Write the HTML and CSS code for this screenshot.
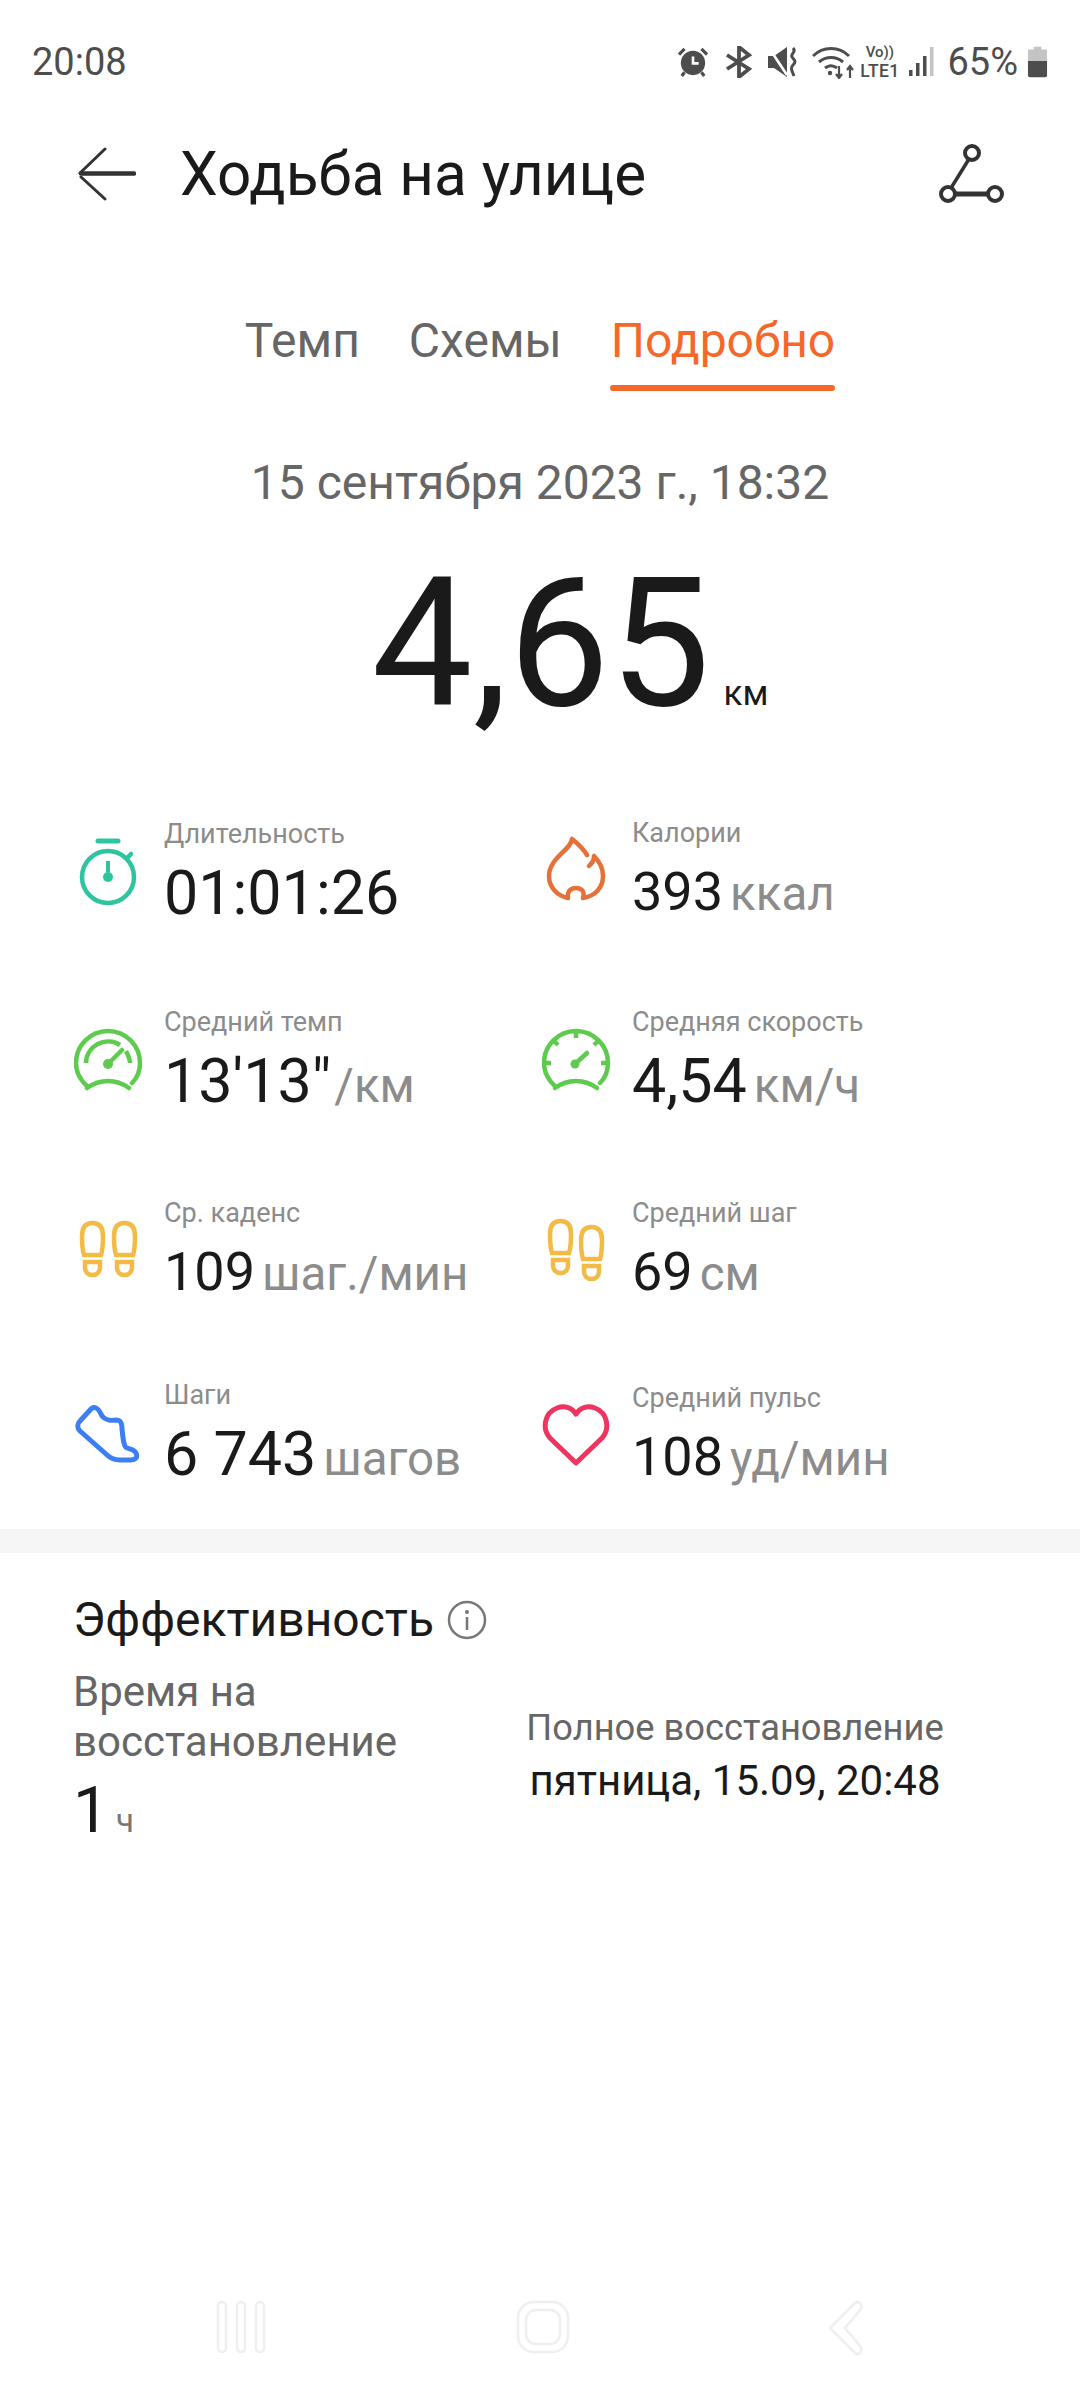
FILE: index.html
```html
<!DOCTYPE html>
<html lang="ru">
<head>
<meta charset="utf-8">
<title>Ходьба на улице</title>
<link rel="stylesheet" href="styles.css">
</head>
<body>
<div class="screen">
  <header class="status">
    <span class="clock">20:08</span>
    <div class="status-right">
      <svg class="si s-alarm" width="30" height="30" viewBox="0 0 32 32"><circle cx="16" cy="17" r="13" fill="#4d4d4d"/><path d="M16 10v7.500h6" stroke="#fff" stroke-width="2.800" fill="none"/><path d="M1 8l6-6M31 8l-6-6M7 27l-3 4M25 27l3 4" stroke="#4d4d4d" stroke-width="3.400" fill="none"/></svg>
      <svg class="si s-bt" width="28" height="32" viewBox="0 0 28 32"><path d="M2 9l22 14-10 8V1l10 8L2 23" stroke="#4d4d4d" stroke-width="3.800" fill="none"/></svg>
      <svg class="si s-mute" width="30" height="30" viewBox="0 0 30 30"><path d="M0 9h6l13-9v30L6 21H0z" fill="#4d4d4d"/><path d="M1 1l18 27" stroke="#fff" stroke-width="2.600"/><path d="M25 1c4 4-3 6-1 9s5 4 1 8c-3 3-1 6 1 11" stroke="#4d4d4d" stroke-width="3" fill="none"/></svg>
      <svg class="si s-wifi" width="42" height="33" viewBox="0 0 42 33"><path d="M1 10c10-10 26-10 36 0M7 16c7-6 17-6 24 0M13 22c4-3 8-3 12 0" stroke="#4d4d4d" stroke-width="3" fill="none"/><circle cx="18" cy="27" r="2.200" fill="#4d4d4d"/><path d="M27 20v12M24 28l3 4 3-4M38 32V20M35 24l3-4 3 4" stroke="#4d4d4d" stroke-width="2.200" fill="none"/></svg>
      <span class="volte"><span class="vo">Vo))</span><span class="lte">LTE1</span></span>
      <svg class="si s-sig" width="26" height="30" viewBox="0 0 26 30"><rect x="1" y="23" width="3.500" height="6" fill="#4d4d4d"/><rect x="8" y="16" width="3.500" height="13" fill="#4d4d4d"/><rect x="15" y="9" width="3.500" height="20" fill="#4d4d4d"/><rect x="22" y="0" width="3.500" height="29" fill="#c4c4c4"/></svg>
      <span class="pct">65%</span>
      <svg class="si s-bat" width="21" height="32" viewBox="0 0 22 32"><path d="M7 0h8v4H7z" fill="#c4c4c4"/><path d="M2 3h18a1 1 0 0 1 1 1v11H1V4a1 1 0 0 1 1-1z" fill="#c4c4c4"/><path d="M1 15h20v15a2 2 0 0 1-2 2H3a2 2 0 0 1-2-2z" fill="#4d4d4d"/></svg>
    </div>
  </header>

  <nav class="appbar">
    <svg class="back" width="58" height="54" viewBox="0 0 58 54"><path d="M27 2L2 26M3 30L27 52" stroke="#333" stroke-width="3" stroke-linecap="round" fill="none"/><path d="M3 26.500h53" stroke="#333" stroke-width="4.500" stroke-linecap="round" fill="none"/></svg>
    <h1 class="title">Ходьба на улице</h1>
    <svg class="share" width="68" height="60" viewBox="0 0 68 60"><circle cx="34" cy="9" r="7" fill="none" stroke="#333" stroke-width="4"/><circle cx="10" cy="50" r="7" fill="none" stroke="#333" stroke-width="4"/><circle cx="57" cy="50" r="7" fill="none" stroke="#333" stroke-width="4"/><path d="M31 15L13 44" stroke="#333" stroke-width="3.500" fill="none"/><path d="M17 50h33" stroke="#333" stroke-width="5" fill="none"/></svg>
  </nav>

  <div class="tabs">
    <span class="tab">Темп</span>
    <span class="tab">Схемы</span>
    <span class="tab active">Подробно</span>
  </div>

  <p class="date">15 сентября 2023 г., 18:32</p>
  <div class="distance"><span class="dist-val">4,65</span><span class="dist-unit">км</span></div>

  <section class="stats">
    <div class="stat">
      <svg class="ic" width="72" height="72" viewBox="0 0 72 72"><path d="M24 5h20" stroke="#2ec4a0" stroke-width="5" stroke-linecap="round"/><circle cx="34" cy="41" r="26" fill="none" stroke="#2ec4a0" stroke-width="4.500"/><path d="M34 25v11" stroke="#2ec4a0" stroke-width="4"/><circle cx="34" cy="41" r="5" fill="#2ec4a0"/><path d="M53 22l4-4" stroke="#2ec4a0" stroke-width="4.500" stroke-linecap="round"/></svg>
      <div class="txt"><div class="lbl">Длительность</div><div class="val"><b>01:01:26</b></div></div>
    </div>
    <div class="stat">
      <svg class="ic" width="72" height="72" viewBox="0 0 72 72"><path d="M45 19C40 11 36 8 30 3 29 14 7 22 7 40c0 12 9 20 19 22-1-6 2-10 8-10s9 4 7 10c12-2 20-10 20-22 0-8-4-15-9-20 0 5-2 7-5 10" fill="none" stroke="#e57038" stroke-width="4.500" stroke-linejoin="round" stroke-linecap="round"/></svg>
      <div class="txt"><div class="lbl">Калории</div><div class="val sm"><b>393</b><i>ккал</i></div></div>
    </div>
    <div class="stat">
      <svg class="ic" width="72" height="72" viewBox="0 0 72 72"><path d="M13 60C4 52 2 44 2 37a32 32 0 0 1 64 0c0 8-3 15-8 20M13 62c7-5 14-7 21-7s14 2 21 7" fill="none" stroke="#5ecb4e" stroke-width="4.500" stroke-linecap="round"/><path d="M12 37a22 22 0 0 1 34-18M52 25c2 4 4 8 4 12" fill="none" stroke="#5ecb4e" stroke-width="4.500"/><circle cx="34" cy="38" r="5" fill="#5ecb4e"/><path d="M34 38l14-14" stroke="#5ecb4e" stroke-width="4.500" stroke-linecap="round"/></svg>
      <div class="txt"><div class="lbl">Средний темп</div><div class="val"><b>13'13"</b><i class="near">/км</i></div></div>
    </div>
    <div class="stat">
      <svg class="ic" width="72" height="72" viewBox="0 0 72 72"><path d="M13 60C4 52 2 44 2 37a32 32 0 0 1 64 0c0 8-3 15-8 20M13 62c7-5 14-7 21-7s14 2 21 7" fill="none" stroke="#5ecb4e" stroke-width="4.500" stroke-linecap="round"/><path d="M34 6v6M12 15l4 4M56 15l-4 4M3 37h6M59 37h6" stroke="#5ecb4e" stroke-width="4.500"/><circle cx="33" cy="38" r="4.500" fill="#5ecb4e"/><path d="M33 38l12-11" stroke="#5ecb4e" stroke-width="4.500" stroke-linecap="round"/></svg>
      <div class="txt"><div class="lbl">Средняя скорость</div><div class="val"><b>4,54</b><i>км/ч</i></div></div>
    </div>
    <div class="stat">
      <svg class="ic" width="72" height="72" viewBox="0 0 72 72"><g fill="none" stroke="#f3bb45" stroke-width="4.500"><path d="M10 39C8 33 8 27 8 20 8 11 12 7 18.500 7S29 11 29 20c0 7 0 13-2 19z"/><path d="M11 46h15v5c0 5-3 8-7.500 8S11 56 11 51z"/><path d="M42 39c-2-6-2-12-2-19 0-9 4-13 10.500-13S61 11 61 20c0 7 0 13-2 19z"/><path d="M43 46h15v5c0 5-3 8-7.500 8S43 56 43 51z"/></g></svg>
      <div class="txt"><div class="lbl">Ср. каденс</div><div class="val sm"><b>109</b><i>шаг./мин</i></div></div>
    </div>
    <div class="stat">
      <svg class="ic" width="72" height="72" viewBox="0 0 72 72"><g fill="none" stroke="#f3bb45" stroke-width="4.500"><path d="M10 37C8 31 8 25 8 18 8 9 12 5 18.500 5S29 9 29 18c0 7 0 13-2 19z"/><path d="M11 44h15v5c0 5-3 8-7.500 8S11 54 11 49z"/><path d="M41 43c-2-6-2-12-2-19 0-9 4-13 10.500-13S60 15 60 24c0 7 0 13-2 19z"/><path d="M42 50h15v5c0 5-3 8-7.500 8S42 60 42 55z"/></g></svg>
      <div class="txt"><div class="lbl">Средний шаг</div><div class="val sm"><b>69</b><i>см</i></div></div>
    </div>
    <div class="stat shift-up">
      <svg class="ic" width="72" height="72" viewBox="0 0 72 72"><path d="M17 10L6 22c-3 3-3 7 0 10l26 23c4 4 8 6 14 6h10c6 0 8-3 6-7-2-4-6-4-9-5-3-1-4-9-5-19 0-6-1-9-6-9-5 1-11 0-14-4-2-4-3-7-6-8-2-1-4 0-5 1z" fill="none" stroke="#3d7ef2" stroke-width="5" stroke-linejoin="round"/></svg>
      <div class="txt"><div class="lbl">Шаги</div><div class="val"><b>6 743</b><i>шагов</i></div></div>
    </div>
    <div class="stat">
      <svg class="ic" width="72" height="72" viewBox="0 0 72 72"><path d="M34 62L8 37C0 28 2 12 15 7c8-3 15 0 19 6 4-6 11-9 19-6 13 5 15 21 7 30z" fill="none" stroke="#ee3560" stroke-width="5" stroke-linejoin="round"/></svg>
      <div class="txt"><div class="lbl">Средний пульс</div><div class="val sm"><b>108</b><i>уд/мин</i></div></div>
    </div>
  </section>

  <div class="divider"></div>

  <section class="perf">
    <div class="perf-head">
      <h2 class="perf-title">Эффективность</h2>
      <svg class="info" width="40" height="40" viewBox="0 0 40 40"><circle cx="20" cy="20" r="18" fill="none" stroke="#777" stroke-width="2.500"/><circle cx="20" cy="12" r="2" fill="#777"/><path d="M20 17v13" stroke="#777" stroke-width="2.500"/></svg>
    </div>
    <div class="perf-body">
      <div class="perf-left">
        <div class="perf-lbl">Время на<br>восстановление</div>
        <div class="perf-val"><b>1</b><i>ч</i></div>
      </div>
      <div class="perf-right">
        <div class="perf-lbl2">Полное восстановление</div>
        <div class="perf-date">пятница, 15.09, 20:48</div>
      </div>
    </div>
  </section>

  <footer class="navbar">
    <svg width="50" height="54" viewBox="0 0 50 54"><g fill="none" stroke="#efefef" stroke-width="2.500"><rect x="2" y="2" width="8" height="50" rx="4"/><rect x="21" y="2" width="8" height="50" rx="4"/><rect x="40" y="2" width="8" height="50" rx="4"/></g></svg>
    <svg width="54" height="54" viewBox="0 0 54 54"><g fill="none" stroke="#efefef" stroke-width="2.500"><rect x="2" y="2" width="50" height="50" rx="16"/><rect x="10" y="10" width="34" height="34" rx="10"/></g></svg>
    <svg width="36" height="56" viewBox="0 0 36 56"><path d="M2 28L27 3c3-3 8 1 6 6L17 28l16 19c2 5-3 9-6 6z" fill="none" stroke="#efefef" stroke-width="2.500"/></svg>
  </footer>
</div>
</body>
</html>
```

FILE: styles.css
```css
* { box-sizing: border-box; }
html, body { margin: 0; padding: 0; background: #fff; }
body { font-family: Roboto, "Noto Sans", sans-serif; color: #1a1a1a; }
.screen { width: 1080px; height: 2400px; display: flex; flex-direction: column; position: relative; }

.status { height: 60px; margin-top: 32px; padding: 0 32px; display: flex; justify-content: space-between; align-items: center; color: #4d4d4d; }
.clock { font-size: 38px; }
.status-right { display: flex; align-items: center; }
.si { display: block; flex: none; }
.s-bt { margin-left: 17px; }
.s-mute { margin-left: 15px; }
.s-wifi { margin-left: 14px; }
.volte { display: flex; flex-direction: column; width: 37px; margin-left: 7px; font-weight: 500; align-items: center; white-space: nowrap; line-height: normal; }
.vo { font-size: 15px; }
.lte { font-size: 17.500px; letter-spacing: 0.4px; }
.s-sig { margin-left: 10px; }
.pct { font-size: 38px; margin-left: 13px; }
.s-bat { margin-left: 9px; }

.appbar { height: 120px; margin-top: 22px; display: flex; align-items: center; padding: 0 74px 0 78px; }
.back { flex: none; margin-right: 44px; }
.title { margin: 0; font-size: 60.200px; font-weight: 400; flex: 1; }
.share { flex: none; }

.tabs { display: flex; justify-content: center; gap: 49px; margin-top: 69px; }
.tab { font-size: 48px; color: #666; height: 91px; line-height: 76px; position: relative; }
.tab.active { color: #f5682a; }
.tab.active::after { content: ""; position: absolute; left: -1px; right: 0; bottom: 3px; height: 6px; border-radius: 3px; background: #f5682a; }

.date { margin: 59px 0 0; text-align: center; font-size: 48px; line-height: 60px; color: #666; }
.distance { display: flex; justify-content: center; align-items: baseline; height: 170px; margin-top: 46px; padding-left: 60px; }
.dist-val { font-size: 180px; line-height: 170px; }
.dist-unit { font-size: 35px; margin-left: 13px; }

.stats { display: grid; grid-template-columns: 468px 1fr; grid-template-rows: 191px 190px 189px 182px; margin: 47px 0 1px; padding-left: 74px; }
.stat { display: flex; align-items: center; gap: 18px; }
.stat .ic { flex: none; }
.shift-up { margin-bottom: 4px; }
.lbl { font-size: 27px; line-height: 36px; color: #8c8c8c; }
.val { font-size: 61px; line-height: 70px; margin-top: 6px; display: flex; align-items: baseline; gap: 7px; white-space: nowrap; }
.val.sm { font-size: 54px; }
.val b { font-weight: 400; }
.val i { font-style: normal; font-size: 47.500px; color: #8c8c8c; }
.val i.near { margin-left: -4px; }

.divider { height: 24px; background: #f6f6f6; }

.perf { padding: 37px 40px 0 73px; }
.perf-head { display: flex; align-items: center; gap: 13px; }
.perf-title { margin: 0; font-size: 48px; font-weight: 400; line-height: 60px; }
.perf-body { display: flex; margin-top: 17px; }
.perf-left { width: 452px; }
.perf-lbl { font-size: 42px; line-height: 50px; color: #666; }
.perf-val { display: flex; align-items: baseline; gap: 7px; margin-top: 6px; }
.perf-val b { font-weight: 400; font-size: 64px; line-height: 76px; }
.perf-val i { font-style: normal; font-size: 33px; color: #777; }
.perf-right { padding-top: 36px; text-align: center; width: 420px; white-space: nowrap; }
.perf-lbl2 { font-size: 36.300px; line-height: 50px; color: #666; }
.perf-date { font-size: 42px; line-height: 56px; }

.navbar { position: absolute; left: 0; right: 0; top: 2300px; height: 56px; }
.navbar svg { position: absolute; top: 0; }
.navbar svg:nth-child(1) { left: 216px; }
.navbar svg:nth-child(2) { left: 516px; }
.navbar svg:nth-child(3) { left: 828px; }
```
